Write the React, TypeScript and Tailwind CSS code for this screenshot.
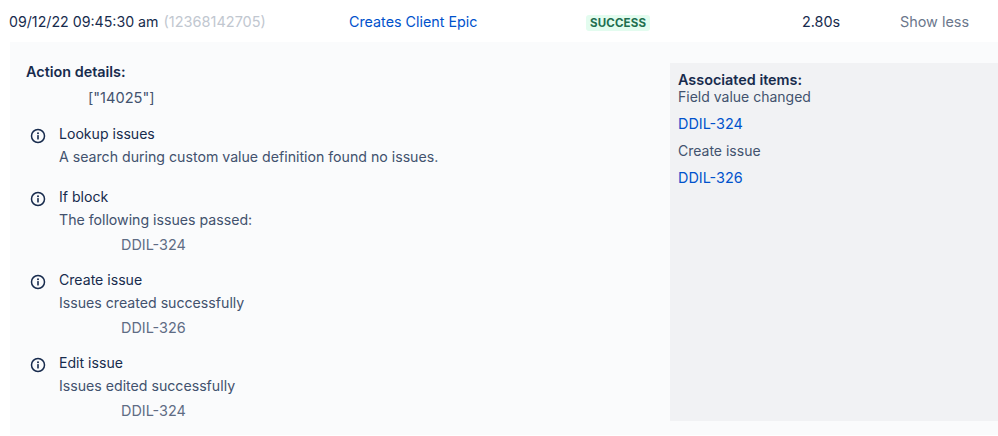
const Info = () => (
  <svg width="16" height="16" viewBox="0 0 16 16" fill="none" className="shrink-0">
    <circle cx="8" cy="8" r="6.5" stroke="#172b4d" strokeWidth="1.5" />
    <circle cx="8" cy="5.2" r="1" fill="#172b4d" />
    <rect x="7.2" y="7" width="1.6" height="4.6" rx="0.6" fill="#172b4d" />
  </svg>
);

type Item = { title: string; desc: string; sub?: string };

const items: Item[] = [
  { title: "Lookup issues", desc: "A search during custom value definition found no issues." },
  { title: "If block", desc: "The following issues passed:", sub: "DDIL-324" },
  { title: "Create issue", desc: "Issues created successfully", sub: "DDIL-326" },
  { title: "Edit issue", desc: "Issues edited successfully", sub: "DDIL-324" },
];

export default function App() {
  return (
    <div className="w-[998px] h-[436px] overflow-hidden bg-white text-[14.4px] leading-[20px] text-[#172b4d] font-['Inter',sans-serif]">
      <div className="flex items-center h-[42px] pl-[9px] pt-[2px]">
        <div className="w-[340px] whitespace-nowrap">
          <span className="text-[14.2px]">09/12/22 09:45:30 am</span>{" "}
          <span className="ml-[1px] text-[14.5px] text-[#c1c7d0]">(12368142705)</span>
        </div>
        <div className="w-[237px] text-[14.3px] text-[#0052cc]">Creates Client Epic</div>
        <div className="w-[216px]">
          <span className="inline-block rounded-[3px] bg-[#e3fcef] px-[4px] text-[11.5px] leading-[16px] font-bold tracking-[0.15px] text-[#216e4e] align-middle">
            SUCCESS
          </span>
        </div>
        <div className="w-[98px]">2.80s</div>
        <div className="text-[#6b778c]">Show less</div>
      </div>
      <div className="ml-[10px] h-[393px] bg-[#fafbfc] flex">
        <div className="w-[660px] pl-[16px] pt-[20px]">
          <div className="font-semibold">Action details:</div>
          <div className="pl-[62px] mt-[6px] text-[14.6px] text-[#42526e]">["14025"]</div>
          <div className="mt-[16px] flex flex-col gap-[15px]">
            {items.map((it) => (
              <div key={it.title + it.desc} className={it.sub ? "flex pl-[4px]" : "flex pl-[4px] mb-[5px]"}>
                <div className="w-[29px] pt-[4px]"><Info /></div>
                <div>
                  <div className="text-[14.1px]">{it.title}</div>
                  <div className="mt-[3px] text-[14.15px] text-[#42526e]">{it.desc}</div>
                  {it.sub && <div className="mt-[5px] pl-[62px] text-[#5e6c84]">{it.sub}</div>}
                </div>
              </div>
            ))}
          </div>
        </div>
        <div className="mt-[21px] h-[358px] flex-1 bg-[#f1f2f4] pl-[8px] pt-[8px]">
          <div className="font-semibold leading-[17px]">Associated items:</div>
          <div className="leading-[17px] text-[14px] text-[#42526e]">Field value changed</div>
          <div className="mt-[9px] text-[#0052cc]">DDIL-324</div>
          <div className="mt-[7px] text-[14px] text-[#42526e]">Create issue</div>
          <div className="mt-[7px] text-[#0052cc]">DDIL-326</div>
        </div>
      </div>
    </div>
  );
}
